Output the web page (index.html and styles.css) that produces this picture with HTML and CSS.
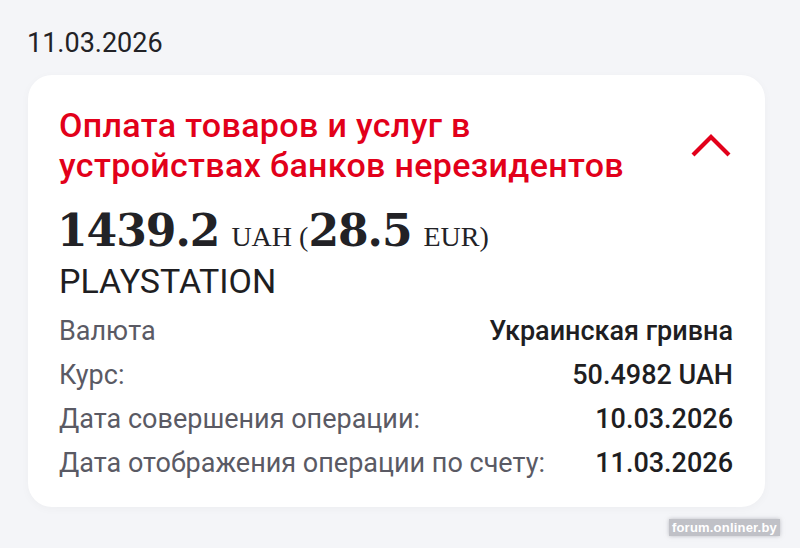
FILE: index.html
```html
<!DOCTYPE html>
<html lang="ru">
<head>
<meta charset="utf-8">
<title>Операция</title>
<link rel="stylesheet" href="styles.css">
</head>
<body>
<div class="page">
  <div class="date">11.03.2026</div>
  <div class="card">
    <div class="head">
      <div class="title">Оплата товаров и услуг в<br>устройствах банков нерезидентов</div>
      <svg class="chev" width="40" height="24" viewBox="0 0 40 24"><polyline points="2,22 20,4 38,22" fill="none" stroke="#e2001a" stroke-width="4.2"/></svg>
    </div>
    <div class="amount"><span class="num">1439.2</span> <span class="cur">UAH (</span><span class="num">28.5</span> <span class="cur">EUR)</span></div>
    <div class="merchant">PLAYSTATION</div>
    <div class="rows">
      <div class="row"><span class="lbl">Валюта</span><span class="val">Украинская гривна</span></div>
      <div class="row"><span class="lbl">Курс:</span><span class="val">50.4982 UAH</span></div>
      <div class="row"><span class="lbl">Дата совершения операции:</span><span class="val">10.03.2026</span></div>
      <div class="row"><span class="lbl">Дата отображения операции по счету:</span><span class="val">11.03.2026</span></div>
    </div>
  </div>
  <div class="wm">forum.onliner.by</div>
</div>
</body>
</html>
```
FILE: styles.css
```css
* { box-sizing: border-box; }
html, body { margin: 0; padding: 0; }
body {
  background: #f4f5f8;
  font-family: Roboto, "Noto Sans", sans-serif;
  width: 800px;
  height: 548px;
  overflow: hidden;
}
.page {
  position: relative;
  height: 548px;
  padding: 28px 35px 0 28px;
}
.date {
  font-size: 27px;
  color: #222226;
  line-height: 30px;
  margin-left: -1px;
}
.card {
  margin-top: 17px;
  background: #fff;
  border-radius: 24px;
  box-shadow: 0 2px 10px rgba(0,0,0,0.03);
  padding: 30px 32px 22px 31px;
}
.head {
  display: flex;
  align-items: flex-start;
  justify-content: space-between;
}
.title {
  color: #e2001a;
  font-weight: 500;
  font-size: 34px;
  line-height: 40px;
  letter-spacing: 0.35px;
}
.chev { display: block; margin-top: 28px; margin-right: 2px; }
.amount {
  margin-top: 26px;
  margin-left: -2px;
  color: #222226;
  line-height: 40px;
  white-space: nowrap;
}
.num {
  font-family: "DejaVu Serif", serif;
  font-weight: bold;
  font-size: 44px;
  letter-spacing: -1px;
}
.cur {
  font-family: "Liberation Serif", serif;
  font-size: 28px;
  margin-left: 8px;
}
.merchant {
  margin-top: 0;
  font-size: 34px;
  color: #1e1e22;
  line-height: 40px;
}
.rows {
  margin-top: 8px;
  display: flex;
  flex-direction: column;
}
.row {
  display: flex;
  justify-content: space-between;
  font-size: 27px;
  line-height: 44px;
}
.lbl { color: #5a5a64; }
.val { color: #1e1e22; font-weight: 500; }
.wm {
  position: absolute;
  right: 20px;
  bottom: 12px;
  font-family: "Liberation Sans", sans-serif;
  font-weight: bold;
  font-size: 13px;
  color: #fff;
  background: rgba(150,150,158,0.55);
  padding: 1px 3px;
  box-shadow: 0 0 4px rgba(150,150,158,0.6);
  letter-spacing: 0.2px;
}
```
